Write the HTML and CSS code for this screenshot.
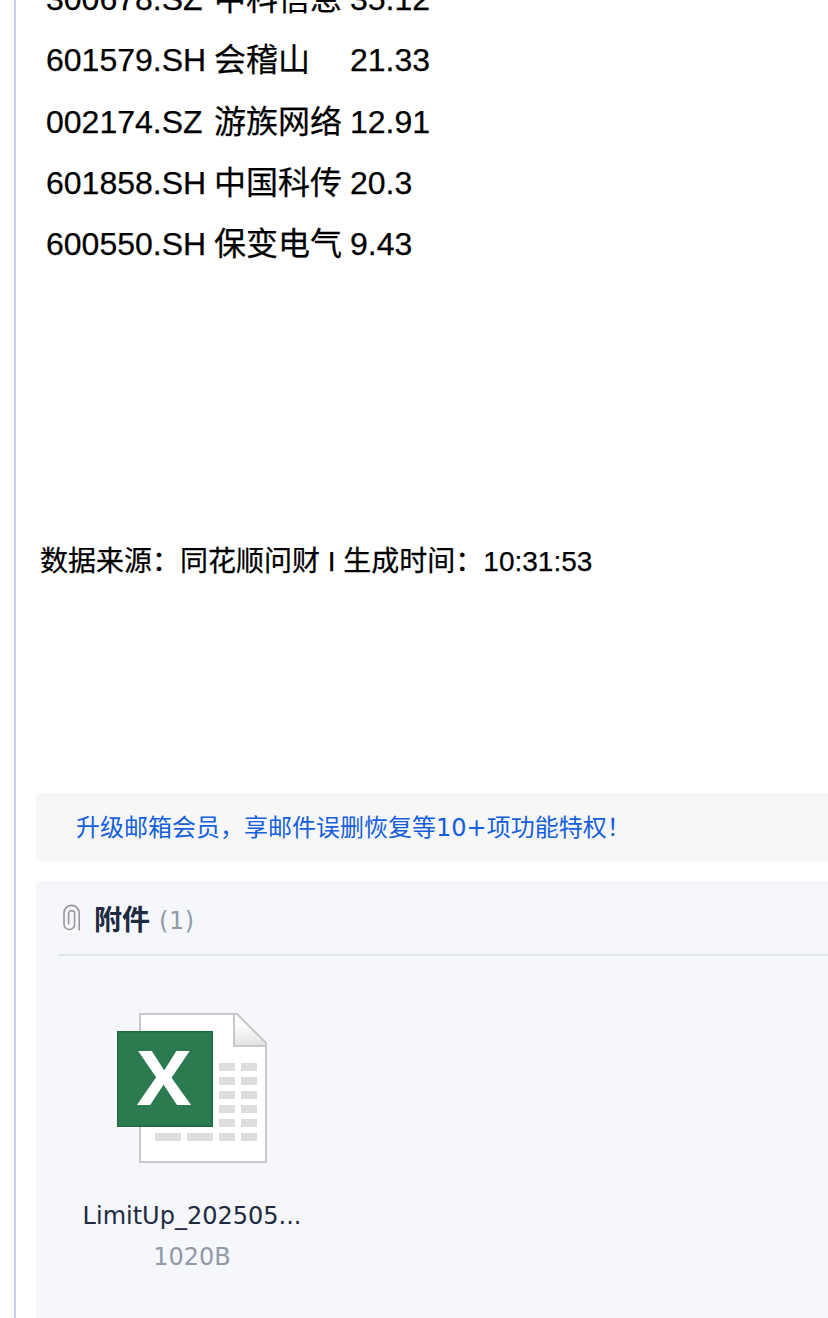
FILE: index.html
```html
<!DOCTYPE html>
<html lang="zh-CN">
<head>
<meta charset="utf-8">
<title>邮件</title>
<link rel="stylesheet" href="styles.css">
</head>
<body>
<main class="mail">
  <div class="stocks">
    <div class="row"><span>300678.SZ</span><span>中科信息</span><span>35.12</span></div>
    <div class="row"><span>601579.SH</span><span>会稽山</span><span>21.33</span></div>
    <div class="row"><span>002174.SZ</span><span>游族网络</span><span>12.91</span></div>
    <div class="row"><span>601858.SH</span><span>中国科传</span><span>20.3</span></div>
    <div class="row"><span>600550.SH</span><span>保变电气</span><span>9.43</span></div>
  </div>
  <p class="source">数据来源：同花顺问财 I 生成时间：10:31:53</p>
  <a class="promo">升级邮箱会员，享邮件误删恢复等10+项功能特权！</a>
  <section class="attachments">
    <header class="heading">
      <svg class="clip" width="18" height="28" viewBox="0 0 18 28" fill="none" stroke="#999" stroke-width="1.6">
        <path d="M16.2 26.5V9A7.6 7.6 0 0 0 1 9v11.2a5.3 5.3 0 0 0 10.6 0V9.6a3 3 0 0 0-6 0V20.5"/>
      </svg>
      <h2 class="title">附件</h2>
      <span class="count">(1)</span>
    </header>
    <div class="file">
      <svg class="excel" width="152" height="152" viewBox="0 0 152 152">
        <defs>
          <linearGradient id="fold" x1="0" y1="0" x2="0" y2="1">
            <stop offset="0.3" stop-color="#fff"/><stop offset="1" stop-color="#e2e2e2"/>
          </linearGradient>
        </defs>
        <path d="M23 1h96l30 30v118H23z" fill="#fff" stroke="#c8c8c8" stroke-width="2" stroke-linejoin="round"/>
        <path d="M117 1v32h32v-3L120 1z" fill="url(#fold)" stroke="#c8c8c8" stroke-width="2" stroke-linejoin="round"/>
        <g fill="#ddd">
          <path d="M102 50h16v8h-16zM124 50h16v8h-16zM102 64h16v8h-16zM124 64h16v8h-16zM102 78h16v8h-16zM124 78h16v8h-16zM102 92h16v8h-16zM124 92h16v8h-16zM102 106h16v8h-16zM124 106h16v8h-16zM102 120h16v8h-16zM124 120h16v8h-16zM38 120h26v8H38zM70 120h26v8H70z"/>
        </g>
        <path d="M.8 18.8h94.4v94.4H.8z" fill="#2c7b50" stroke="#1e6c40" stroke-width="1.6"/>
        <text class="mark" x="47" y="92.2" text-anchor="middle" textLength="54" lengthAdjust="spacingAndGlyphs">X</text>
      </svg>
      <div class="name">LimitUp_202505...</div>
      <div class="size">1020B</div>
    </div>
  </section>
</main>
</body>
</html>
```
FILE: styles.css
```css
* { box-sizing: border-box; }
body {
  margin: 0;
  height: 1318px;
  overflow: hidden;
  background: #fff;
  color: #000;
  font-family: "DejaVu Sans", "Noto Sans CJK SC", sans-serif;
}
.mail {
  display: flex;
  flex-direction: column;
  height: 1318px;
  margin-left: 14px;
  padding-left: 20px;
  border-left: 2px solid #c1d2f0;
}
.stocks {
  flex: none;
  margin: -31px 0 0 10px;
  font: 32px/61.3px "Liberation Sans", "Noto Sans CJK SC", sans-serif;
  -webkit-text-stroke: 0.25px #000;
}
.row {
  display: grid;
  grid-template-columns: 168px 136px 1fr;
  height: 61.3px;
  white-space: nowrap;
}
.source {
  margin: 267px 0 0 4px;
  font: 28px/40px "Liberation Sans", "Noto Sans CJK SC", sans-serif;
  -webkit-text-stroke: 0.25px #000;
}
.promo {
  flex: none;
  height: 68px;
  margin-top: 211px;
  padding-left: 40px;
  border-radius: 4px 0 0 4px;
  background: #f7f7f7;
  color: #145fdb;
  font-size: 24px;
  line-height: 70px;
}
.attachments {
  flex: 1;
  margin-top: 20px;
  padding-left: 22px;
  border-radius: 4px 0 0 0;
  background: #f5f7fb;
}
.heading {
  display: flex;
  align-items: center;
  height: 75px;
  padding-left: 5px;
  border-bottom: 2px solid #e1e4ed;
}
.title {
  margin: 0 9px 0 13px;
  color: #202a40;
  font: bold 28px/40px "Noto Sans CJK SC", sans-serif;
}
.count {
  padding-top: 6px;
  color: #929aaa;
  font-size: 24px;
  letter-spacing: 0.6px;
}
.file {
  width: 268px;
  padding-top: 57px;
  text-align: center;
}
.excel {
  display: block;
  margin-left: 59px;
}
.mark {
  fill: #fff;
  font: bold 76px "Open Sans", sans-serif;
}
.name {
  margin-top: 30px;
  color: #202a40;
  font-size: 24px;
  line-height: 42px;
}
.size {
  color: #929aaa;
  font-size: 24px;
  line-height: 40px;
}
```
